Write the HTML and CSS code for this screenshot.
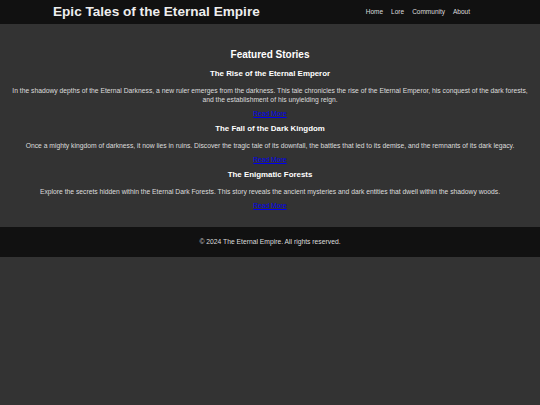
FILE: index.html
```html
<!DOCTYPE html>
<html lang="en">
<head>
<meta charset="utf-8">
<title>Epic Tales of the Eternal Empire</title>
<link rel="stylesheet" href="styles.css">
</head>
<body>
<header class="site-header">
  <div class="header-inner">
    <h1 class="site-title">Epic Tales of the Eternal Empire</h1>
    <nav class="site-nav">
      <a href="#">Home</a>
      <a href="#">Lore</a>
      <a href="#">Community</a>
      <a href="#">About</a>
    </nav>
  </div>
</header>
<main class="content">
  <h2 class="section-title">Featured Stories</h2>
  <article class="story">
    <h3>The Rise of the Eternal Emperor</h3>
    <p>In the shadowy depths of the Eternal Darkness, a new ruler emerges from the darkness. This tale chronicles the rise of the Eternal Emperor, his conquest of the dark forests, and the establishment of his unyielding reign.</p>
    <a href="#">Read More</a>
  </article>
  <article class="story">
    <h3>The Fall of the Dark Kingdom</h3>
    <p>Once a mighty kingdom of darkness, it now lies in ruins. Discover the tragic tale of its downfall, the battles that led to its demise, and the remnants of its dark legacy.</p>
    <a href="#">Read More</a>
  </article>
  <article class="story">
    <h3>The Enigmatic Forests</h3>
    <p>Explore the secrets hidden within the Eternal Dark Forests. This story reveals the ancient mysteries and dark entities that dwell within the shadowy woods.</p>
    <a href="#">Read More</a>
  </article>
</main>
<footer class="site-footer">
  <p>&copy; 2024 The Eternal Empire. All rights reserved.</p>
</footer>
</body>
</html>
```
FILE: styles.css
```css
html, body {
  margin: 0;
  padding: 0;
  background: #333333;
}
body {
  font-family: "Liberation Sans", Arial, sans-serif;
  font-size: 6.75px;
  line-height: 9px;
  color: #dddddd;
}
.site-header {
  background: #111111;
  height: 24px;
}
.header-inner {
  width: 434px;
  margin: 0 auto;
  height: 24px;
  display: flex;
  align-items: center;
  justify-content: space-between;
}
.site-title {
  margin: 0;
  font-size: 13.6px;
  line-height: 15.6px;
  color: #eeeeee;
}
.site-nav {
  display: flex;
  gap: 8px;
  padding-right: 17px;
  font-size: 6.5px;
  line-height: 7.5px;
}
.site-nav a {
  color: #dddddd;
  text-decoration: none;
}
.content {
  padding: 16.6px 10px 17px;
  text-align: center;
}
.section-title {
  font-size: 10px;
  line-height: 11.5px;
  margin: 8.3px 0 8.9px;
  color: #ffffff;
}
.story h3 {
  font-size: 7.9px;
  line-height: 9.1px;
  margin: 6.5px 0 7.7px;
  color: #ffffff;
}
.story p {
  margin: 4.7px 0;
}
.story a {
  color: #0000ee;
}
.site-footer {
  background: #111111;
  height: 30px;
  display: flex;
  align-items: center;
  justify-content: center;
}
.site-footer p {
  margin: 0;
}
```
